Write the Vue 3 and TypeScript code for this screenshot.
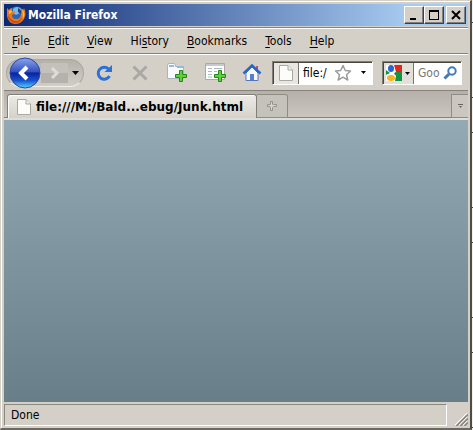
<script setup lang="ts">
import { ref } from 'vue'

interface MenuEntry {
  before: string
  key: string
  after: string
}

const menus: MenuEntry[] = [
  { before: '', key: 'F', after: 'ile' },
  { before: '', key: 'E', after: 'dit' },
  { before: '', key: 'V', after: 'iew' },
  { before: 'Hi', key: 's', after: 'tory' },
  { before: '', key: 'B', after: 'ookmarks' },
  { before: '', key: 'T', after: 'ools' },
  { before: '', key: 'H', after: 'elp' },
]

const address = ref('file:/')
const query = ref('')
</script>

<template>
  <div class="desktop">
    <div class="window">
      <header class="titlebar">
        <svg class="logo" viewBox="0 0 20 20" aria-hidden="true">
          <circle cx="10.5" cy="9.5" r="8" fill="#2b66b4" />
          <path d="M7 4Q11 0 15 4L14 8L10 10L7 8Z" fill="#79b7e6" />
          <path d="M12 3Q16 5 15 9L12 7Z" fill="#1c3f86" />
          <path d="M1 3L3 5Q4 3 6 3L6 6L9 7L8 9L6 10Q6 14 10 14Q15 14 15 9Q16 7 15 4Q18 6 18 3Q21 9 18 14Q15 19 9 19Q2 18 1 11Z" fill="#e9761a" />
          <path d="M2 9Q3 14 8 16Q14 17 16 12Q15 18 9 18Q2 17 2 9Z" fill="#c9480f" />
          <path d="M16 4Q20 8 17 14Q17 9 16 4ZM3 6L5 5L6 7L3 9Z" fill="#ffc63c" />
        </svg>
        <h1>Mozilla Firefox</h1>
        <div class="controls">
          <button type="button" aria-label="Minimize">
            <svg viewBox="0 0 16 14"><path d="M4 10H10V12H4Z" fill="#000" /></svg>
          </button>
          <button type="button" aria-label="Maximize">
            <svg viewBox="0 0 16 14"><path d="M3 2H13V12H3ZM4 4V11H12V4Z" fill="#000" fill-rule="evenodd" /></svg>
          </button>
          <button type="button" class="close" aria-label="Close">
            <svg viewBox="0 0 16 14"><path d="M4 3L12 11M12 3L4 11" stroke="#000" stroke-width="2" /></svg>
          </button>
        </div>
      </header>

      <nav class="menubar">
        <button v-for="m in menus" :key="m.key" type="button">{{ m.before }}<u>{{ m.key }}</u>{{ m.after }}</button>
      </nav>

      <div class="toolbar">
        <div class="history">
          <button type="button" class="back" aria-label="Back">
            <svg viewBox="0 0 32 32">
              <defs>
                <linearGradient id="orb" x2="0" y2="1">
                  <stop offset="0" stop-color="#8ba5ea" />
                  <stop offset=".46" stop-color="#3150c3" />
                  <stop offset=".5" stop-color="#0a239c" />
                  <stop offset=".75" stop-color="#1751d0" />
                  <stop offset="1" stop-color="#55d4ff" />
                </linearGradient>
              </defs>
              <circle cx="16" cy="16" r="15" fill="url(#orb)" stroke="#29489f" />
              <path d="M18 10L12 16L18 22" fill="none" stroke="#fff" stroke-width="4" />
            </svg>
          </button>
          <button type="button" class="forward" aria-label="Forward">
            <svg viewBox="0 0 20 20"><path d="M8 5L13 10L8 15" fill="none" stroke="#dedcd8" stroke-width="3" /></svg>
          </button>
          <button type="button" class="recent" aria-label="Recent pages">
            <svg viewBox="0 0 7 4"><path d="M0 0H7L3.5 4Z" fill="#000" /></svg>
          </button>
        </div>
        <div class="tools">
          <button type="button" aria-label="Reload">
            <svg viewBox="0 0 20 20">
              <path d="M14.5 6A6 6 0 1 0 15.5 13" fill="none" stroke="#2c70d8" stroke-width="3" />
              <path d="M18 2V9H10.500Z" fill="#2c70d8" />
            </svg>
          </button>
          <button type="button" aria-label="Stop">
            <svg viewBox="0 0 20 20"><path d="M3.500 3.500L16.500 16.500M16.500 3.500L3.500 16.500" stroke="#aaa8a5" stroke-width="3" /></svg>
          </button>
          <button type="button" aria-label="New tab">
            <svg viewBox="0 0 22 22">
              <path d="M1.500 16.500V3.500Q1.500 1.500 3 1.500H8Q9.500 1.500 9.500 4.500H17.500V16.500Z" fill="#f8fafc" stroke="#a6b4c3" />
              <path d="M3 3H8V5H3ZM11 4H18V6H11Z" fill="#91b9e6" />
              <path d="M13.500 8.500H16.500V12.500H20.500V15.500H16.500V19.500H13.500V15.500H9.500V12.500H13.500Z" fill="#5cd335" stroke="#25871b" />
            </svg>
          </button>
          <button type="button" aria-label="New window">
            <svg viewBox="0 0 22 22">
              <path d="M1.500 1.500H20.500V17.500H1.500Z" fill="#fff" stroke="#a9a9a9" />
              <path d="M2 2H20V4H2Z" fill="#c3c9cf" />
              <path d="M4 6.500H8M10 6.500H18M4 9.500H8M4 12.500H8M4 15H8M10 9.500H13" stroke="#aeb8c4" />
              <path d="M14.500 8.500H17.500V12.500H21.500V15.500H17.500V19.500H14.500V15.500H10.500V12.500H14.500Z" fill="#5cd335" stroke="#25871b" />
            </svg>
          </button>
          <button type="button" aria-label="Home">
            <svg viewBox="0 0 20 20">
              <path d="M4 10L10 4L16 10V17.500H4Z" fill="#f7f9ff" stroke="#5576b9" />
              <path d="M14 3H16V8L14 6Z" fill="#bd5750" />
              <path d="M1.500 10.500L10 2.500L18.500 10.500" fill="none" stroke="#2c66c9" stroke-width="2.500" />
              <path d="M8 11H12V17H8Z" fill="#5680c9" />
            </svg>
          </button>
        </div>
        <div class="field address">
          <span class="site">
            <svg class="page" viewBox="0 0 14 16"><path d="M.5 .5H9L13.500 5V15.500H.5Z" fill="#fcfcfa" stroke="#aaa8a2" /><path d="M9 .5V5H13.500" fill="#eee" stroke="#aaa8a2" /></svg>
          </span>
          <input v-model="address" type="text" aria-label="Address" />
          <button type="button" class="star" aria-label="Bookmark this page">
            <svg viewBox="0 0 18 18"><path d="M9 1.500L11.300 6.500L16.500 7L12.500 10.700L13.800 16L9 13.200L4.200 16L5.500 10.700L1.500 7L6.700 6.500Z" fill="#fff" stroke="#9c9c9c" stroke-width="1.500" stroke-linejoin="round" /></svg>
          </button>
          <button type="button" class="drop" aria-label="Show history">
            <svg viewBox="0 0 5 3"><path d="M0 0H5L2.500 3Z" fill="#000" /></svg>
          </button>
        </div>
        <div class="field search">
          <button type="button" class="engine" aria-label="Choose search engine">
            <svg class="google" viewBox="0 0 16 16">
              <path d="M0 0H16V16H0Z" fill="#fff" />
              <path d="M8 0H16V7H10Z" fill="#e5261f" />
              <path d="M10 7H16V16H9L10 11L7 8Z" fill="#139346" />
              <path d="M0 5L4 8L0 10Z" fill="#139346" />
              <ellipse cx="5" cy="3.500" rx="3" ry="3.500" fill="#2865d5" />
              <path d="M5 7H9L8 9L10 11H4Z" fill="#fff" />
              <ellipse cx="5" cy="13" rx="4" ry="3" fill="#f5b51c" />
            </svg>
            <svg class="arrow" viewBox="0 0 5 3"><path d="M0 0H5L2.500 3Z" fill="#000" /></svg>
          </button>
          <input v-model="query" type="text" placeholder="Goo" aria-label="Search" />
          <button type="button" class="go" aria-label="Search">
            <svg viewBox="0 0 14 14"><circle cx="9" cy="5" r="3.700" fill="#fff" stroke="#4379b5" stroke-width="2" /><path d="M6 8L1.500 12.500" stroke="#4379b5" stroke-width="3" /></svg>
          </button>
        </div>
      </div>

      <div class="tabs">
        <button type="button" class="tab">
          <svg class="page" viewBox="0 0 14 16"><path d="M.5 .5H9L13.500 5V15.500H.5Z" fill="#fcfcfa" stroke="#aaa8a2" /><path d="M9 .5V5H13.500" fill="#eee" stroke="#aaa8a2" /></svg>
          <span>file:///M:/Bald...ebug/Junk.html</span>
        </button>
        <button type="button" class="newtab" aria-label="Open a new tab">
          <svg viewBox="0 0 10 10"><path d="M3.500 3.500V.5H5.500V3.500M6.500 3.500H9.500V5.500H6.500M5.500 6.500V9.500H3.500V6.500M3 5.500H.5V3.500H3" fill="none" stroke="#94918b" /><path d="M4 1H5V9H4ZM1 4H9V5H1Z" fill="#d8d5d0" /></svg>
        </button>
        <button type="button" class="alltabs" aria-label="List all tabs">
          <svg viewBox="0 0 5 4"><path d="M0 0H5V1H0ZM1 2H4L2.500 4Z" fill="#66635e" /></svg>
        </button>
      </div>

      <main class="content"></main>

      <footer class="status">
        <span class="message">Done</span>
        <svg class="grip" viewBox="0 0 13 13">
          <path d="M0 12L12 0M4 12L12 4M8 12L12 8" stroke="#fff" />
          <path d="M1.500 13L13 1.500M5.500 13L13 5.500M9.500 13L13 9.500" stroke="#86827b" stroke-width="1.500" />
        </svg>
      </footer>
    </div>
    <div class="ruler"></div>
  </div>
</template>

<style>
body {
  background: #f4f1e8;
}
</style>

<style scoped>
.desktop {
  display: flex;
  min-height: 100vh;
  font: 12px/16px "DejaVu Sans Condensed", "DejaVu Sans", sans-serif;
  font-stretch: condensed;
  color: #000;
}
.desktop * {
  box-sizing: border-box;
}
.window {
  flex: 1;
  min-width: 0;
  display: flex;
  flex-direction: column;
  box-sizing: border-box;
  padding: 2px 2px 1px 3px;
  border: 1px solid #d4d0c8;
  border-right: 2px solid #504c45;
  border-bottom: 2px solid #6c6963;
  box-shadow: inset 1px 1px #fff;
  background: #d4d0c8;
}
button,
input {
  margin: 0;
  padding: 0;
  border: 0;
  border-radius: 0;
  background: none;
  font: inherit;
  color: inherit;
}
svg {
  display: block;
  flex: none;
}
.titlebar {
  display: flex;
  align-items: center;
  height: 24px;
  padding: 0 2px;
  border-top: 1px solid #d4d0c8;
  border-bottom: 1px solid #d4d0c8;
  background: linear-gradient(90deg, #0b2772, #a6caf0 87%);
}
.logo {
  width: 20px;
  height: 20px;
}
h1 {
  flex: 1;
  margin: 0 0 0 2px;
  font-size: 12px;
  line-height: 16px;
  color: #fff;
}
.controls {
  display: flex;
}
.controls button {
  width: 20px;
  height: 18px;
  padding: 1px;
  border: 1px solid;
  border-color: #fff #404040 #404040 #fff;
  box-shadow: inset -1px -1px #808080;
  background: #d4d0c8;
}
.controls .close {
  margin-left: 2px;
}
.controls svg {
  width: 16px;
  height: 14px;
}
.menubar {
  display: flex;
  gap: 18px;
  align-items: center;
  height: 27px;
  padding: 0 8px;
  border-top: 1px solid #87837c;
  border-bottom: 1px solid #87837c;
  box-shadow: inset 0 1px #fff;
}
.menubar u {
  text-underline-offset: 2px;
}
.toolbar {
  display: flex;
  align-items: center;
  height: 36px;
  padding: 0 6px 0 2px;
  border-top: 1px solid #fff;
}
.history {
  display: flex;
  align-items: center;
  width: 78px;
  height: 28px;
  border: 1px solid #aaa7a1;
  border-bottom-color: #f0eee9;
  border-radius: 14px;
  background: linear-gradient(#b4b1ab, #d2cec7);
}
.back svg {
  width: 32px;
  height: 32px;
}
.back {
  margin-left: 2px;
}
.forward {
  width: 27px;
  height: 20px;
  padding-left: 3px;
  background: linear-gradient(#c4c1bc 50%, #b5b2ad 50%);
}
.forward svg {
  width: 20px;
  height: 20px;
}
.recent {
  padding: 4px;
}
.recent svg {
  width: 7px;
  height: 4px;
}
.tools {
  display: flex;
  gap: 16px;
  align-items: center;
  margin: 0 auto 0 10px;
}
.tools svg {
  width: 20px;
  height: 20px;
}
.tools button:nth-child(3) svg,
.tools button:nth-child(4) svg {
  width: 22px;
  height: 22px;
}
.field {
  display: flex;
  align-items: center;
  height: 24px;
  border: 1px solid;
  border-color: #807d77 #fff #fff #807d77;
  box-shadow: inset 1px 1px #484641;
  background: #fff;
}
.field input {
  flex: 1;
  min-width: 0;
  outline: none;
}
.address {
  width: 101px;
}
.site {
  align-self: stretch;
  display: flex;
  align-items: center;
  padding: 0 5px;
  margin: 1px 4px 0 1px;
  border-right: 1px solid #77746e;
  background: #e9e6e1;
}
.page {
  width: 14px;
  height: 16px;
}
.star svg {
  width: 18px;
  height: 18px;
}
.drop {
  padding: 8px 6px 8px 9px;
}
.drop svg,
.engine .arrow {
  width: 5px;
  height: 3px;
}
.search {
  width: 80px;
  margin-left: 9px;
}
.engine {
  align-self: stretch;
  display: flex;
  align-items: center;
  gap: 3px;
  margin: 1px 4px 0 1px;
  padding: 0 3px 0 2px;
  border-right: 1px solid #77746e;
  background: #e3e0da;
}
.google {
  width: 16px;
  height: 16px;
}
.search input::placeholder {
  color: #777;
  opacity: 1;
}
.go {
  margin-right: 4px;
}
.go svg {
  width: 14px;
  height: 14px;
}
.tabs {
  display: flex;
  align-items: stretch;
  height: 30px;
  padding: 3px 0 0 3px;
  border-top: 1px solid #87837c;
  border-bottom: 2px solid #e0ddd7;
  box-shadow: inset 0 -1px #87837c;
  background: linear-gradient(#b5b1aa, #cbc7c0);
}
.tab {
  display: flex;
  flex: 0 1 250px;
  align-items: center;
  gap: 5px;
  min-width: 0;
  padding: 0 4px 0 9px;
  border: 1px solid #817e78;
  border-bottom: 0;
  border-radius: 3px 3px 0 0;
  box-shadow: inset 1px 1px #fff;
  background: linear-gradient(#eeece8, #d5d1c9);
  font-family: "DejaVu Sans", sans-serif;
  font-stretch: normal;
  font-weight: bold;
  white-space: nowrap;
}
.newtab {
  width: 31px;
  display: flex;
  align-items: center;
  justify-content: center;
  border: 1px solid #8f8c86;
  border-left: 0;
  border-radius: 0 3px 0 0;
  background: #c5c1bb;
}
.newtab svg {
  width: 10px;
  height: 10px;
}
.alltabs {
  display: flex;
  align-items: center;
  justify-content: center;
  width: 17px;
  margin-left: auto;
  border: 1px solid #8f8c86;
  border-right: 0;
  background: #cbc7c0;
}
.alltabs svg {
  width: 5px;
  height: 4px;
}
.content {
  flex: 1;
  background: linear-gradient(#93aab5, #687e88);
}
.status {
  display: flex;
  align-items: stretch;
  gap: 8px;
  height: 25px;
  padding: 2px 0 1px;
}
.message {
  flex: 1;
  padding: 2px 6px;
  border: 1px solid;
  border-color: #8b8882 #fff #fff #8b8882;
}
.grip {
  align-self: flex-end;
  width: 13px;
  height: 13px;
}
.ruler {
  width: 1px;
  background: repeating-linear-gradient(
    #f4f1e8 0 22px,
    #46433c 22px 23px,
    #f4f1e8 23px 97px,
    #46433c 97px 98px,
    #f4f1e8 98px 110px
  );
}
</style>
